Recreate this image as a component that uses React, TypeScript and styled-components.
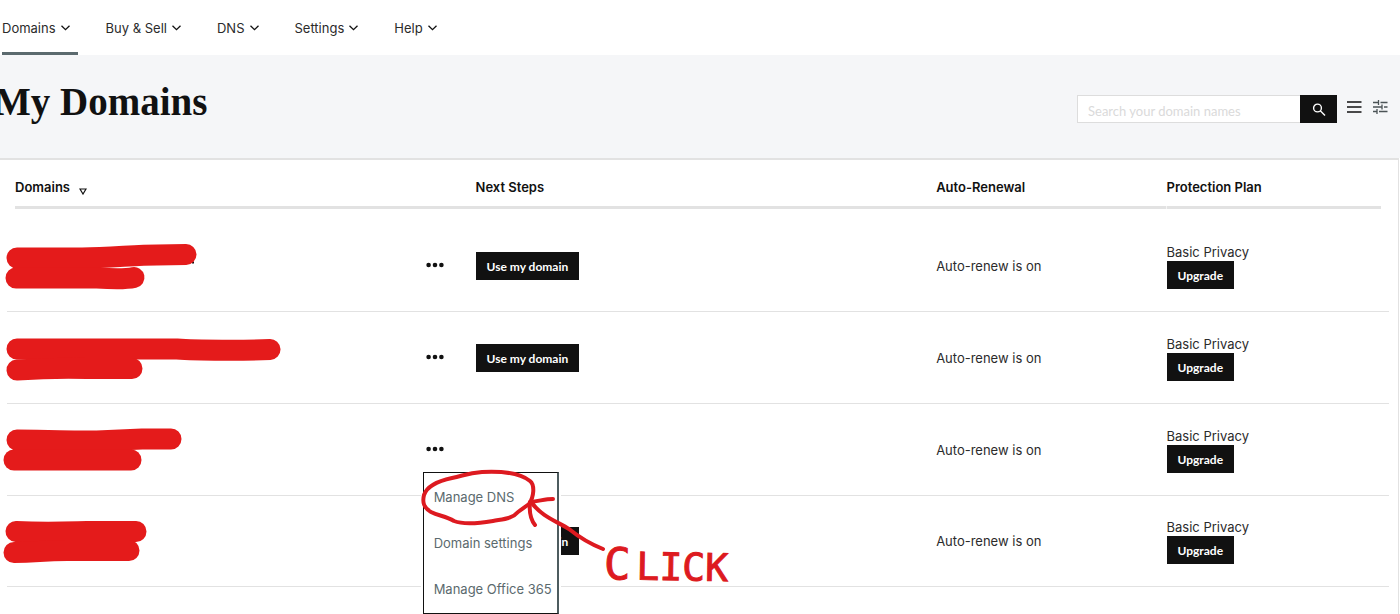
import React from "react";
import styled, { createGlobalStyle } from "styled-components";

const ink = "#111111";
const slate = "#5b6a6e";
const rule = "#e2e2e2";
const red = "#e41b1b";
const marker = "#dd1a20";

const GlobalStyle = createGlobalStyle`
  *, *::before, *::after { box-sizing: border-box; }
  body {
    margin: 0;
    background: #ffffff;
    color: ${ink};
    font-family: Inter, "Liberation Sans", sans-serif;
    font-size: 13px;
    line-height: 18px;
  }
  button, input { font-family: inherit; }
`;

const Page = styled.div`
  display: flex;
  flex-direction: column;
  min-height: 100vh;
  overflow: hidden;
`;

const Nav = styled.nav`
  display: flex;
  gap: 28px;
  height: 55px;
  padding-left: 2px;
`;

const NavItem = styled.button<{ $active?: boolean }>`
  display: flex;
  align-items: center;
  gap: 5px;
  padding: 4px 8px 0 0;
  border: 0;
  border-bottom: 3px solid ${(p) => (p.$active ? slate : "transparent")};
  background: none;
  color: #2b2b2b;
  font-size: 13px;
  line-height: 18px;
  cursor: pointer;
`;

const Header = styled.header`
  display: flex;
  align-items: flex-start;
  justify-content: space-between;
  height: 103px;
  padding: 24px 11px 0 0;
  background: #f5f6f8;
`;

const Title = styled.h1`
  margin: 0 0 0 -6px;
  font-family: "Liberation Serif", serif;
  font-size: 39px;
  font-weight: 700;
  line-height: 46px;
`;

const Tools = styled.div`
  display: flex;
  align-items: flex-start;
  gap: 8px;
  padding-top: 16px;
`;

const Search = styled.form`
  display: flex;
  height: 28px;
`;

const SearchInput = styled.input`
  width: 223px;
  padding: 4px 10px 0;
  border: 1px solid #dddddd;
  border-right: 0;
  background: #ffffff;
  color: ${ink};
  font-family: Lato, sans-serif;
  font-size: 13px;
  &::placeholder { color: #dadada; opacity: 1; }
`;

const SearchButton = styled.button`
  display: grid;
  place-items: center;
  width: 37px;
  padding: 0;
  border: 0;
  background: ${ink};
  cursor: pointer;
`;

const IconButton = styled.button`
  display: grid;
  place-items: center;
  width: 18px;
  height: 24px;
  padding: 0;
  border: 0;
  background: none;
  cursor: pointer;
`;

const Panel = styled.main`
  flex: 1;
  margin-right: 1px;
  padding: 0 9px 0 7px;
  border-top: 2px solid ${rule};
  border-right: 1px solid ${rule};
`;

const Table = styled.table`
  width: 100%;
  table-layout: fixed;
  border-collapse: collapse;
`;

const Th = styled.th<{ $edge?: "start" | "end" }>`
  height: 49px;
  padding: 9px 0 0 ${(p) => (p.$edge === "start" ? 8 : 0)}px;
  background: linear-gradient(${rule}, ${rule}) no-repeat
    ${(p) => (p.$edge === "end" ? "left" : "right")} bottom /
    ${(p) => (p.$edge ? "calc(100% - 8px)" : "100%")} 3px;
  font-size: 13px;
  font-weight: 600;
  text-align: left;
  vertical-align: top;
`;

const HeadText = styled.span`
  display: flex;
  align-items: center;
  gap: 9px;
  height: 36px;
`;

const SortButton = styled.button`
  display: flex;
  padding: 8px 0 0;
  border: 0;
  background: none;
  cursor: pointer;
`;

const Row = styled.tr`
  height: 92px;
  border-bottom: 1px solid ${rule};
  &:first-child { height: 102px; }
  &:last-child { height: 91px; }
  &:first-child > td { padding-top: 13px; }
  &:first-child > td:nth-child(-n + 2) { padding-top: 10px; }
`;

const Td = styled.td<{ $drop?: boolean }>`
  padding: ${(p) => (p.$drop ? 1 : 0)}px 0 0;
  color: #2b2b2b;
  vertical-align: middle;
`;

const Redaction = styled.svg`
  display: block;
  overflow: visible;
`;

const MenuAnchor = styled.div`
  position: relative;
  display: flex;
  padding-left: 4px;
`;

const DotsButton = styled.button`
  display: flex;
  padding: 6px 0;
  border: 0;
  background: none;
  cursor: pointer;
`;

const Action = styled.button`
  display: block;
  height: 28px;
  padding: 2px 11px 0;
  border: 0;
  background: ${ink};
  color: #ffffff;
  font-family: Lato, sans-serif;
  font-size: 12px;
  font-weight: 700;
  line-height: 16px;
  white-space: nowrap;
  cursor: pointer;
`;

const Menu = styled.ul`
  position: absolute;
  z-index: 2;
  top: 32px;
  left: 1px;
  width: 136px;
  margin: 0;
  padding: 1px 0;
  border: 1px solid ${ink};
  border-right: 2px solid #4d5c5f;
  background: #ffffff;
  box-shadow: 0 0 0 2px #ffffff;
  list-style: none;
`;

const MenuItem = styled.button`
  display: block;
  width: 100%;
  height: 46px;
  padding: 0 0 0 10px;
  border: 0;
  background: none;
  color: ${slate};
  font-size: 13px;
  text-align: left;
  white-space: nowrap;
  cursor: pointer;
`;

const Annotation = styled.div`
  position: absolute;
  z-index: 3;
  top: 25px;
  left: -6px;
  display: flex;
  align-items: flex-end;
  pointer-events: none;
`;

const Callout = styled.strong`
  margin: 0 0 -6px -4px;
  color: ${marker};
  font-family: "DejaVu Sans Mono", monospace;
  font-size: 38px;
  font-weight: 400;
  line-height: 48px;
  -webkit-text-stroke: 1px ${marker};
  transform: rotate(1deg);
  &::first-letter { margin-right: 6px; font-size: 44px; }
`;

const Chevron = () => (
  <svg width="9" height="6" viewBox="0 0 9 6" fill="none" stroke={ink} strokeWidth="1.3" aria-hidden="true">
    <path d="M.5 .7 4.5 4.7 8.5 .7" />
  </svg>
);

const Dots = () => (
  <svg width="18" height="6" viewBox="0 0 18 6" fill={ink} aria-hidden="true">
    <circle cx="2.6" cy="3" r="2.3" />
    <circle cx="9" cy="3" r="2.3" />
    <circle cx="15.4" cy="3" r="2.3" />
  </svg>
);

const navItems = ["Domains", "Buy & Sell", "DNS", "Settings", "Help"];

type DomainRow = { strokes: string[]; setup: boolean; menuOpen?: boolean; speck?: boolean };

const rows: DomainRow[] = [
  {
    strokes: ["M10 17H75C105 16.500 130 14 150 14L179 13.500", "M9 37H90C105 38 120 38 127 36.500"],
    setup: true,
    speck: true,
  },
  { strokes: ["M10 16H170C190 17.500 240 17.500 263 16.500", "M10 37C40 35 60 35 80 35.500H125"], setup: true },
  { strokes: ["M10 15C50 15 60 16.500 90 16L135 14H164", "M7 35H124"], setup: false, menuOpen: true },
  { strokes: ["M9 14.500C40 16 60 15 80 14.500H129", "M7 35.500C30 35.500 35 33.500 60 33.500H122"], setup: true },
];

const menuItems = ["Manage DNS", "Domain settings", "Manage Office 365"];

function ClickHint() {
  return (
    <Annotation>
      <svg width="192" height="120" viewBox="0 0 192 120" fill="none" stroke={marker} strokeWidth="4" strokeLinecap="round" strokeLinejoin="round" aria-hidden="true">
        <path d="M36 13C22 16 11 21 8 30C6 38 8 43 15 47C23 51 30 51 38 56C48 60 65 58 77 56C88 54 96 54 102 47L113 39C118 32 119 20 114 16C104 8 85 6 66 7C51 8 47 11 36 13" />
        <path d="M187 84C172 78 164 73 153 64C142 57 125 51 116 38" />
        <path d="M137 34C129 34 124 36 114 37C113 47 115 55 119 60" />
      </svg>
      <Callout>CLICK</Callout>
    </Annotation>
  );
}

export default function App() {
  return (
    <Page>
      <GlobalStyle />
      <Nav aria-label="Main">
        {navItems.map((label, i) => (
          <NavItem key={label} type="button" $active={i === 0}>
            {label}
            <Chevron />
          </NavItem>
        ))}
      </Nav>
      <Header>
        <Title>My Domains</Title>
        <Tools>
          <Search onSubmit={(e) => e.preventDefault()}>
            <SearchInput type="text" aria-label="Search your domain names" placeholder="Search your domain names" />
            <SearchButton type="submit" aria-label="Search">
              <svg width="14" height="14" viewBox="0 0 14 14" fill="none" stroke="#fff" strokeWidth="1.400" aria-hidden="true">
                <circle cx="5.500" cy="6" r="3.900" />
                <path d="M8.300 8.800 13 13.500" />
              </svg>
            </SearchButton>
          </Search>
          <IconButton type="button" aria-label="List view">
            <svg width="16" height="14" viewBox="0 0 16 14" stroke={ink} strokeWidth="1.600" aria-hidden="true">
              <path d="M1 2H15.500M1 7H15.500M1 12H15.500" />
            </svg>
          </IconButton>
          <IconButton type="button" aria-label="Filters">
            <svg width="16" height="14" viewBox="0 0 16 14" fill="none" stroke="#4b5356" strokeWidth="1.300" aria-hidden="true">
              <path d="M1 2.500H6M8.500 2.500H15.500M6.500 0V5M1 7H9.500M12 7H15.500M10 4.500V9.500M1 11.500H4.500M7 11.500H15.500M5 9V14" />
            </svg>
          </IconButton>
        </Tools>
      </Header>
      <Panel>
        <Table>
          <colgroup>
            <col />
            <col style={{ width: "3.9%" }} />
            <col style={{ width: "33.33%" }} />
            <col style={{ width: "16.67%" }} />
            <col style={{ width: "16.1%" }} />
          </colgroup>
          <thead>
            <tr>
              <Th $edge="start" colSpan={2}>
                <HeadText>
                  Domains
                  <SortButton type="button" aria-label="Sort by domain">
                    <svg width="8" height="7" viewBox="0 0 8 7" fill="none" stroke={ink} strokeWidth="1.200" aria-hidden="true">
                      <path d="M1 1H7L4 6Z" />
                    </svg>
                  </SortButton>
                </HeadText>
              </Th>
              <Th><HeadText>Next Steps</HeadText></Th>
              <Th><HeadText>Auto-Renewal</HeadText></Th>
              <Th $edge="end"><HeadText>Protection Plan</HeadText></Th>
            </tr>
          </thead>
          <tbody>
            {rows.map((row, i) => (
              <Row key={i}>
                <Td>
                  <Redaction width="280" height="48" viewBox="0 0 280 48" fill="none" stroke={red} strokeWidth="21" strokeLinecap="round" strokeLinejoin="round" role="img" aria-label="Hidden domain name">
                    {row.speck && <path d="M185 21.500H187" stroke={ink} strokeWidth="2" strokeLinecap="butt" />}
                    {row.strokes.map((d) => <path key={d} d={d} />)}
                  </Redaction>
                </Td>
                <Td>
                  <MenuAnchor>
                    <DotsButton type="button" aria-label="More options" aria-expanded={!!row.menuOpen}>
                      <Dots />
                    </DotsButton>
                    {row.menuOpen && (
                      <>
                        <Menu>
                          {menuItems.map((label) => (
                            <li key={label}><MenuItem type="button">{label}</MenuItem></li>
                          ))}
                        </Menu>
                        <ClickHint />
                      </>
                    )}
                  </MenuAnchor>
                </Td>
                <Td $drop>{row.setup && <Action type="button">Use my domain</Action>}</Td>
                <Td $drop>Auto-renew is on</Td>
                <Td $drop>
                  Basic Privacy
                  <Action type="button">Upgrade</Action>
                </Td>
              </Row>
            ))}
          </tbody>
        </Table>
      </Panel>
    </Page>
  );
}
